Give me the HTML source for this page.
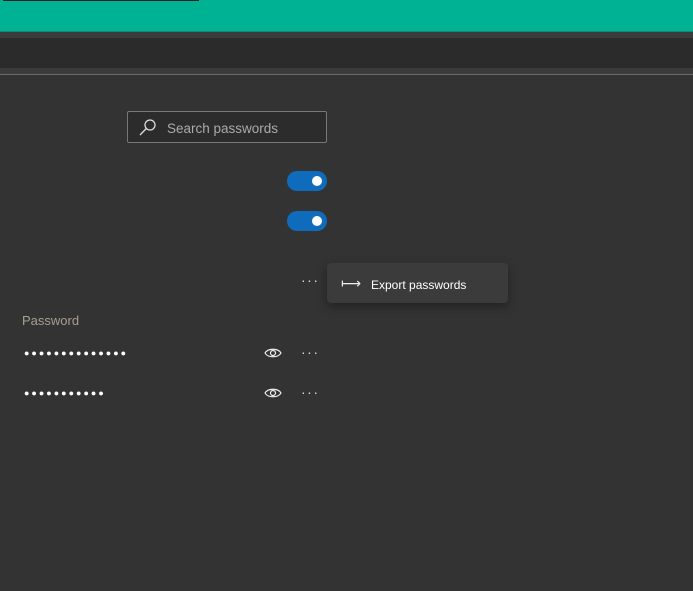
<!DOCTYPE html>
<html><head><meta charset="utf-8"><style>
*{margin:0;padding:0;box-sizing:border-box}
body{width:693px;height:591px;background:#333333;position:relative;overflow:hidden;font-family:"Segoe UI","Liberation Sans",sans-serif}
.a{position:absolute}
.tog{width:40px;height:20px;border-radius:10px;background:#0f6cbd}
.tog::after{content:"";position:absolute;left:25px;top:5px;width:10px;height:10px;border-radius:50%;background:#fff}
.dots{color:#ddd;font-size:14px;letter-spacing:1.5px}
.pw{color:#fff;font-size:9px;letter-spacing:2px}
</style></head><body>
<div class="a" style="left:0;top:0;width:693px;height:31px;background:#00b294"></div>
<div class="a" style="left:3px;top:0;width:196px;height:1px;background:#1f1f1f"></div>
<div class="a" style="left:0;top:31px;width:693px;height:1px;background:#0e8a74"></div>
<div class="a" style="left:0;top:32px;width:693px;height:6px;background:#3b3b3b"></div>
<div class="a" style="left:0;top:38px;width:693px;height:30px;background:#2b2b2b"></div>
<div class="a" style="left:0;top:68px;width:693px;height:6px;background:#3b3b3b"></div>
<div class="a" style="left:0;top:74px;width:693px;height:1px;background:#6a6a6a"></div>

<div class="a" style="left:127px;top:111px;width:200px;height:32px;border:1px solid #777;border-radius:2px;background:#2c2c2c"></div>
<svg class="a" style="left:138px;top:117px" width="20" height="20" viewBox="0 0 20 20"><circle cx="12" cy="8" r="5" fill="none" stroke="#ddd" stroke-width="1.3"/><line x1="8.3" y1="11.5" x2="2" y2="18" stroke="#ddd" stroke-width="1.3"/></svg>
<div class="a" style="left:167px;top:121px;color:#aaa;font-size:13.5px">Search passwords</div>

<div class="a tog" style="left:287px;top:171px"></div>
<div class="a tog" style="left:287px;top:211px"></div>

<div class="a dots" style="left:301px;top:272px">···</div>
<div class="a" style="left:327px;top:263px;width:181px;height:40px;background:#3b3b3b;border-radius:4px;box-shadow:0 4px 10px rgba(0,0,0,0.35)"></div>
<div class="a" style="left:341px;top:275px;color:#eee;font-size:14px">⟼</div>
<div class="a" style="left:371px;top:278px;color:#fff;font-size:12px">Export passwords</div>

<div class="a" style="left:22px;top:313px;color:#a89f91;font-size:13px">Password</div>
<div class="a pw" style="left:24px;top:348px">●●●●●●●●●●●●●●</div>
<div class="a pw" style="left:24px;top:388px">●●●●●●●●●●●</div>
<svg class="a" style="left:264px;top:347px" width="18" height="12" viewBox="0 0 18 12"><path d="M1 6C4 1 14 1 17 6C14 11 4 11 1 6Z" fill="none" stroke="#eee" stroke-width="1.2"/><circle cx="9" cy="6" r="2.5" fill="none" stroke="#eee" stroke-width="1.2"/></svg>
<svg class="a" style="left:264px;top:387px" width="18" height="12" viewBox="0 0 18 12"><path d="M1 6C4 1 14 1 17 6C14 11 4 11 1 6Z" fill="none" stroke="#eee" stroke-width="1.2"/><circle cx="9" cy="6" r="2.5" fill="none" stroke="#eee" stroke-width="1.2"/></svg>
<div class="a dots" style="left:301px;top:344px">···</div>
<div class="a dots" style="left:301px;top:384px">···</div>
</body></html>
